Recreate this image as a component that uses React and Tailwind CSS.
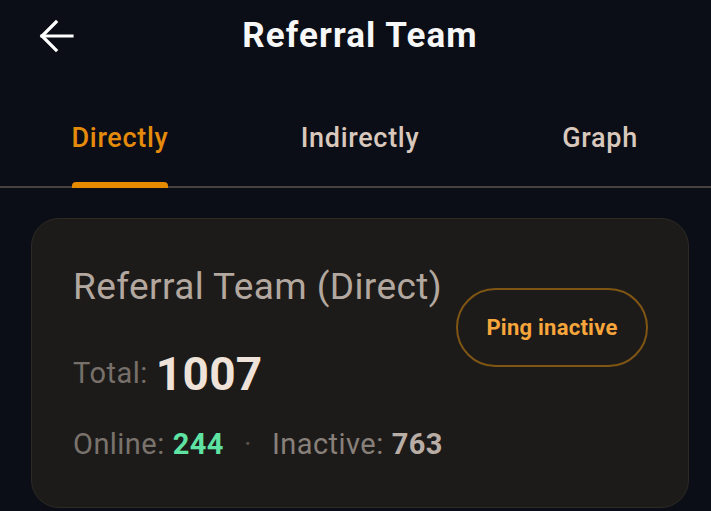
import React from "react";

export default function App() {
  return (
    <div className="w-[711px] h-[511px] overflow-hidden bg-[#0b0e16]" style={{ fontFamily: "Roboto, 'Noto Sans', sans-serif" }}>
      <div className="w-[720px]">
        {/* Header */}
        <div className="h-[72px] grid grid-cols-[1fr_auto_1fr] items-center">
          <div className="pl-[38px] flex items-center">
            <svg width="38" height="38" viewBox="0 0 38 38" fill="none" stroke="#ffffff" strokeWidth="3.2" strokeLinecap="square" strokeLinejoin="miter">
              <path d="M4 19H34" />
              <path d="M18 5L4 19L18 33" />
            </svg>
          </div>
          <div className="text-[35px] leading-[40px] font-bold text-[#f7f7f7] tracking-[1.1px]">Referral Team</div>
          <div />
        </div>

        {/* Tabs */}
        <div className="grid grid-cols-3 border-b-2 border-[#48433e] pt-[50px]">
          <div className="flex justify-center">
            <div className="flex flex-col items-stretch">
              <span className="text-[27px] leading-[32px] font-medium tracking-[0.7px] text-[#e58b0c] text-center">Directly</span>
              <div className="h-[28px]" />
              <div className="h-[6px] -mb-[2px] mx-[1px] rounded-t-[4px] bg-[#e68a00]" />
            </div>
          </div>
          <div className="flex justify-center">
            <div className="flex flex-col items-stretch">
              <span className="text-[27px] leading-[32px] font-medium tracking-[0.7px] text-[#d9c8bc] text-center">Indirectly</span>
              <div className="h-[28px]" />
              <div className="h-[6px] -mb-[2px]" />
            </div>
          </div>
          <div className="flex justify-center">
            <div className="flex flex-col items-stretch">
              <span className="text-[27px] leading-[32px] font-medium tracking-[0.7px] text-[#d9c8bc] text-center">Graph</span>
              <div className="h-[28px]" />
              <div className="h-[6px] -mb-[2px]" />
            </div>
          </div>
        </div>

        {/* Card */}
        <div className="mt-[30px] mx-[31px] h-[290px] rounded-[28px] border border-[#2d2a26] bg-[#1d1b19] pl-[41px] pr-[40px] pt-[46px] flex justify-between items-start">
          <div className="flex flex-col">
            <div className="text-[37px] leading-[44px] tracking-[0.4px] text-[#b3a89f]">Referral Team (Direct)</div>
            <div className="mt-[36px] h-[57px] flex items-center">
              <span className="text-[29px] tracking-[0.5px] text-[#77706a]">Total:</span>
              <span className="ml-[8px] text-[46px] font-bold tracking-[0.3px] text-[#efe3d9] leading-[56px]">1007</span>
            </div>
            <div className="mt-[24px] h-[36px] flex items-center text-[29px] leading-[36px] tracking-[0.45px]">
              <span className="text-[#7a736d]">Online:</span>
              <span className="ml-[8px] font-bold text-[#5fe3a3]">244</span>
              <span className="mx-[20px] text-[#56514c]">·</span>
              <span className="text-[#88807a]">Inactive:</span>
              <span className="ml-[8px] font-bold text-[#b9aea6]">763</span>
            </div>
          </div>
          <button className="mt-[23px] w-[192px] h-[79px] rounded-full border-2 border-[#7f5514] text-[#f7a63c] text-[22px] tracking-[0.25px] font-bold flex items-center justify-center">
            Ping inactive
          </button>
        </div>
      </div>
    </div>
  );
}
